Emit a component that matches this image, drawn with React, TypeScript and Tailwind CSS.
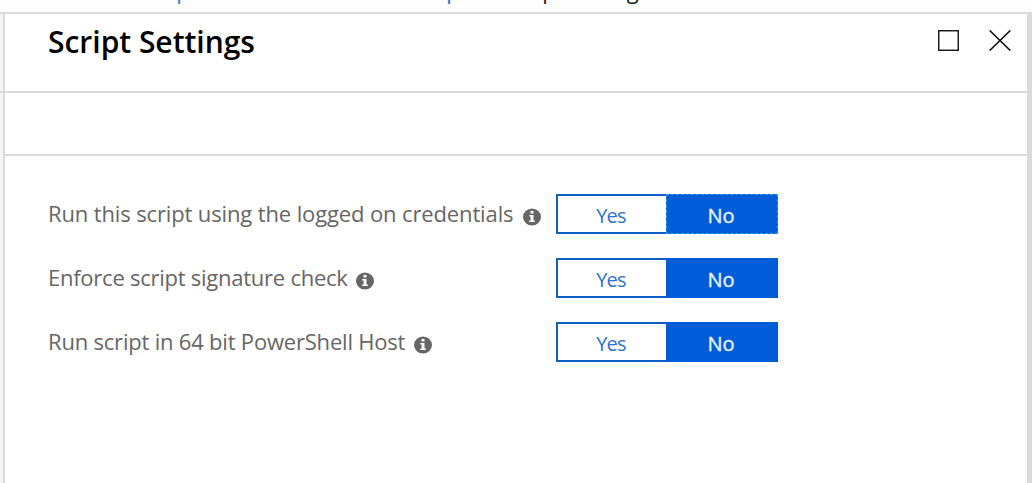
import React from "react";

function InfoIcon() {
  return (
    <svg className="mt-[7px] h-[18px] w-[18px] shrink-0" viewBox="0 0 18 18" aria-hidden="true">
      <ellipse cx="9" cy="9" rx="9" ry="8.6" fill="#666" />
      <rect x="7.5" y="2.9" width="3" height="2.6" fill="#fff" />
      <path d="M6.3 7h4.2v5.6h1.3V14H6.2v-1.4h1.4V8.4H6.3z" fill="#fff" />
    </svg>
  );
}

function Toggle({ focused }: { focused?: boolean }) {
  return (
    <div className="flex h-10 w-[222px] text-[20px] leading-[40px]">
      <button className="flex w-[110px] items-center justify-center border-2 border-r-0 border-[#105fc9] bg-white pt-[3px] pr-[2px] text-[#2f6fd0]">
        <span className="tracking-[-0.8px]">Yes</span>
      </button>
      <button
        className={
          focused
            ? "flex w-[112px] items-center justify-center border border-dashed border-[#25a5e5] bg-[#015cda] pt-[3px] pr-[2px] font-medium text-[#e8f1ff]"
            : "flex w-[112px] items-center justify-center border border-[#015cda] bg-[#015cda] pt-[3px] pr-[2px] font-medium text-[#e8f1ff]"
        }
      >
        <span className="[-webkit-text-stroke:0.4px_#e8f1ff]">No</span>
      </button>
    </div>
  );
}

const settings = [
  { label: "Run this script using the logged on credentials", width: "w-[475px] tracking-[-0.13px]", focused: true },
  { label: "Enforce script signature check", width: "w-[308px] tracking-[-0.25px]" },
  { label: "Run script in 64 bit PowerShell Host", width: "w-[366px] tracking-[-0.2px]" },
];

export default function App() {
  return (
    <div className="flex h-[483px] w-[1032px] flex-col overflow-hidden bg-white font-['Open_Sans','Noto_Sans',sans-serif]">
      <nav className="flex h-[14px] shrink-0 items-end overflow-hidden border-b-2 border-[#dadada] bg-[#fdfdfd] text-[22px] leading-[28px] whitespace-pre">
        <span className="mb-[8px] ml-[140px] w-[270px] tracking-[-0.2px] text-[#2f6fd0]">Scripts</span>
        <span className="mb-[8px] w-[96px] tracking-[-0.2px] text-[#2f6fd0]">Scripts</span>
        <span className="mb-[8px] tracking-[-0.2px] text-[#222]">Script Settings</span>
      </nav>
      <div className="flex min-h-0 flex-1">
        <div className="w-[3px] shrink-0 bg-[#f4f4f4]">
          <div className="mt-[77px] h-[2px] bg-[#dadada]" />
        </div>
        <main className="flex flex-1 flex-col border-l-2 border-[#dadada]">
          <header className="flex h-[79px] justify-between border-b-2 border-[#dadada] pl-[43px]">
            <h1 className="mt-[8px] text-[30px] leading-[40px] font-semibold tracking-[-0.02px] text-black">Script Settings</h1>
            <div className="mt-[16px] flex pr-[16px]">
              <svg className="mr-[30px] h-[21px] w-[21px]" viewBox="0 0 21 21">
                <rect x="0.75" y="0.75" width="19.5" height="19.5" fill="none" stroke="#111" strokeWidth="1.4" />
              </svg>
              <svg className="h-[21px] w-[22px]" viewBox="0 0 22 21">
                <path d="M.7.5 21.3 20.5M21.3.5.7 20.5" stroke="#111" strokeWidth="1.6" />
              </svg>
            </div>
          </header>
          <div className="h-[63px] border-b-2 border-[#dadada]" />
          <section className="flex flex-col gap-6 pt-[38px] pl-[43px]">
            {settings.map((s) => (
              <div key={s.label} className="flex h-10">
                <div className="flex w-[508px] items-center pb-px text-[22px] whitespace-nowrap text-[#666]">
                  <span className={s.width}>{s.label}</span>
                  <InfoIcon />
                </div>
                <Toggle focused={s.focused} />
              </div>
            ))}
          </section>
        </main>
        <div className="w-[5px] shrink-0 bg-[#dadada]" />
      </div>
    </div>
  );
}
